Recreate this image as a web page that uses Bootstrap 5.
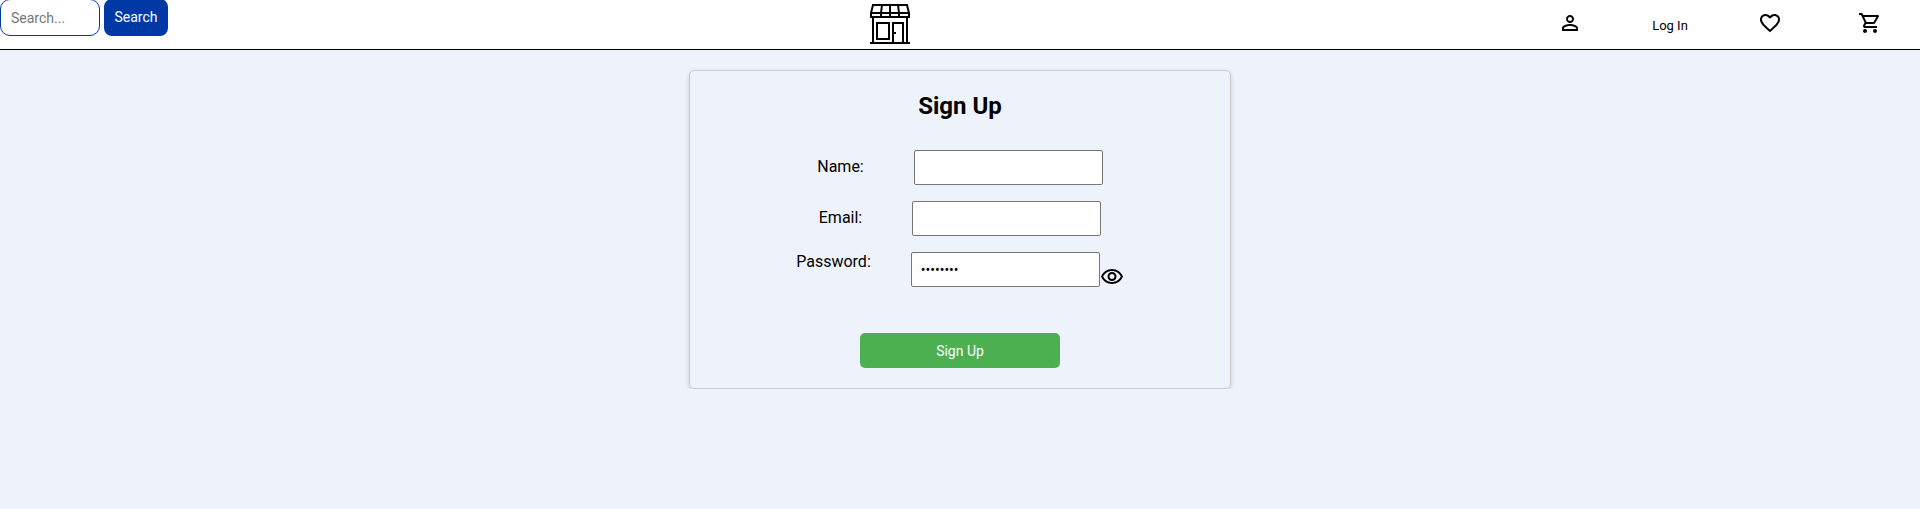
<!DOCTYPE html>
<html lang="en">
<head>
<meta charset="utf-8">
<meta name="viewport" content="width=device-width, initial-scale=1">
<title>Sign Up</title>
<link href="https://cdn.jsdelivr.net/npm/bootstrap@5.3.0/dist/css/bootstrap.min.css" rel="stylesheet">
<style>
  body { background: #eef2fa; color: #000; font-family: Roboto, sans-serif; line-height: 19px; }
  .site-bar { display: grid; grid-template-columns: calc(50% - 90px) auto 1fr; height: 50px; border-bottom: 1px solid #000; }
  .search-form { margin-top: -1px; gap: 4px; }
  .search-box { width: 100px; height: 37px; padding: 0 10px; border: 1px solid #0039a6; border-radius: 10px; font-size: 14px; }
  .search-box::placeholder { color: #757575; }
  .search-btn { width: 64px; height: 37px; padding: 0; border: 0; border-radius: 8px; background: #0039a6; color: #fff; font-size: 14px; }
  .site-links a { width: 100px; height: 46px; color: #000; font-size: 13px; text-decoration: none; }
  .signup-card { width: 542px; max-width: 100%; margin-top: 20px; padding: 21px 20px 20px; border: 1px solid #ccc; border-radius: 5px; box-shadow: 0 2px 5px rgba(0,0,0,.15); }
  .signup-title { font-size: 24px; font-weight: 700; line-height: 28px; margin-bottom: 30px; }
  .field-row { gap: 50px; margin-bottom: 16px; }
  .field-row label { padding-top: 7px; }
  .password-row { gap: 40px; margin-bottom: 46px; }
  .field-box { width: 189px; height: 35px; padding: 0 9px; border: 1px solid #767676; border-radius: 2px; background: #fff; font-size: 14px; color: #000; }
  .eye-btn { padding: 13px 0 0; margin-bottom: -2px; border: 0; background: none; color: #000; line-height: 0; }
  .signup-btn { width: 200px; height: 35px; padding: 0; border: 0; border-radius: 5px; background: #4caf50; color: #fff; font-size: 14px; }
</style>
</head>
<body>
<header class="site-bar bg-white">
  <form class="search-form d-flex align-items-start" role="search">
    <input class="search-box" type="search" placeholder="Search..." aria-label="Search">
    <button class="search-btn" type="button">Search</button>
  </form>
  <a href="#" class="pt-1 lh-1" aria-label="Home">
    <svg class="d-block" width="40" height="40" viewBox="0 0 40 40" fill="none" stroke="#000" stroke-width="2">
      <path d="M3 1H37L39 9V13H1V9ZM1 9H39M12 1L11 9V13M20 1V13M28 1L29 9V13M3 13V39M37 13V39M0 39H40M7 19H19V35H7ZM23 39V19H33V39M24 29H26"/>
    </svg>
  </a>
  <nav class="site-links d-flex justify-content-end">
    <a href="#" class="d-flex align-items-center justify-content-center" aria-label="Account"><svg width="24" height="24" viewBox="0 0 24 24"><path d="M12 5.9a2.1 2.1 0 1 1 0 4.2 2.1 2.1 0 0 1 0-4.2m0 9c2.97 0 6.1 1.46 6.1 2.1v1.1H5.9V17c0-.64 3.13-2.1 6.1-2.1M12 4C9.79 4 8 5.79 8 8s1.79 4 4 4 4-1.79 4-4-1.79-4-4-4m0 9c-2.67 0-8 1.34-8 4v3h16v-3c0-2.66-5.33-4-8-4"/></svg></a>
    <a href="#" class="d-flex align-items-center justify-content-center pt-1">Log In</a>
    <a href="#" class="d-flex align-items-center justify-content-center" aria-label="Favourites"><svg width="24" height="24" viewBox="0 0 24 24"><path d="M16.5 3c-1.74 0-3.41.81-4.5 2.09C10.91 3.81 9.24 3 7.5 3 4.42 3 2 5.42 2 8.5c0 3.78 3.4 6.86 8.55 11.54L12 21.35l1.45-1.32C18.6 15.36 22 12.28 22 8.5 22 5.42 19.58 3 16.5 3m-4.4 15.55-.1.1-.1-.1C7.14 14.24 4 11.39 4 8.5 4 6.5 5.5 5 7.5 5c1.54 0 3.04.99 3.57 2.36h1.87C13.46 5.99 14.96 5 16.5 5c2 0 3.5 1.5 3.5 3.5 0 2.89-3.14 5.74-7.9 10.05"/></svg></a>
    <a href="#" class="d-flex align-items-center justify-content-center" aria-label="Cart"><svg width="24" height="24" viewBox="0 0 24 24"><path d="M15.55 13c.75 0 1.41-.41 1.75-1.03l3.58-6.49c.37-.66-.11-1.48-.87-1.48H5.21l-.94-2H1v2h2l3.6 7.59-1.35 2.44C4.52 15.37 5.48 17 7 17h12v-2H7l1.1-2zM6.16 6h12.15l-2.76 5H8.53zM7 18c-1.1 0-1.99.9-1.99 2S5.9 22 7 22s2-.9 2-2-.9-2-2-2m10 0c-1.1 0-1.99.9-1.99 2s.89 2 1.99 2 2-.9 2-2-.9-2-2-2"/></svg></a>
  </nav>
</header>
<main class="d-flex justify-content-center">
  <form class="signup-card">
    <h1 class="signup-title text-center">Sign Up</h1>
    <div class="field-row d-flex justify-content-center align-items-start">
      <label for="name">Name:</label>
      <input class="field-box" id="name" type="text">
    </div>
    <div class="field-row d-flex justify-content-center align-items-start">
      <label for="email">Email:</label>
      <input class="field-box" id="email" type="email">
    </div>
    <div class="password-row d-flex justify-content-center align-items-start">
      <label for="password">Password:</label>
      <div class="d-flex align-items-start">
        <input class="field-box" id="password" type="password" value="password" autocomplete="off">
        <button class="eye-btn" type="button" aria-label="Show password"><svg width="24" height="24" viewBox="0 0 24 24" fill="currentColor"><path d="M12 6c3.79 0 7.17 2.13 8.82 5.5C19.17 14.87 15.79 17 12 17s-7.17-2.13-8.82-5.5C4.83 8.13 8.21 6 12 6m0-2C7 4 2.73 7.11 1 11.5 2.73 15.89 7 19 12 19s9.27-3.11 11-7.5C21.270 7.110 17 4 12 4m0 5c1.380 0 2.500 1.120 2.500 2.500S13.380 14 12 14s-2.500-1.120-2.500-2.500S10.620 9 12 9m0-2c-2.480 0-4.500 2.020-4.500 4.500S9.520 16 12 16s4.500-2.020 4.500-4.500S14.480 7 12 7"/></svg></button>
      </div>
    </div>
    <div class="text-center lh-1"><button class="signup-btn d-block mx-auto" type="button">Sign Up</button></div>
  </form>
</main>
<script src="https://cdn.jsdelivr.net/npm/bootstrap@5.3.0/dist/js/bootstrap.bundle.min.js"></script>
</body>
</html>
